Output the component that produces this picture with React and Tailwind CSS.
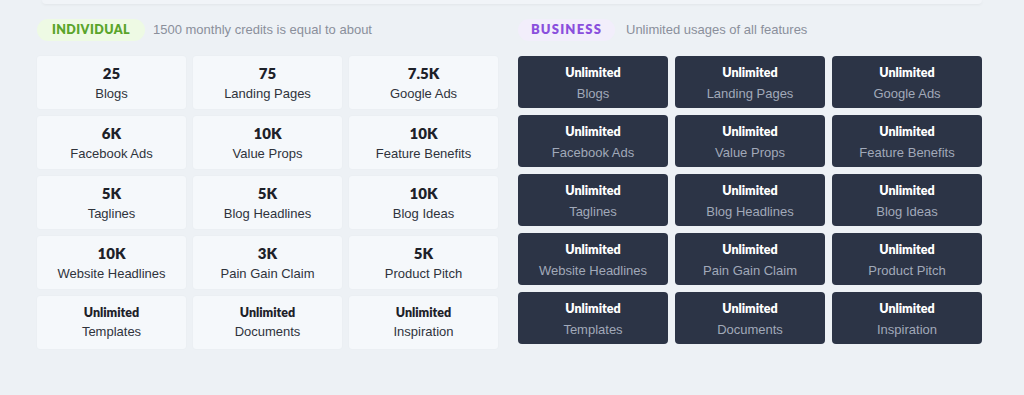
import React from 'react';

const individual = [
  ['25', 'Blogs'],
  ['75', 'Landing Pages'],
  ['7.5K', 'Google Ads'],
  ['6K', 'Facebook Ads'],
  ['10K', 'Value Props'],
  ['10K', 'Feature Benefits'],
  ['5K', 'Taglines'],
  ['5K', 'Blog Headlines'],
  ['10K', 'Blog Ideas'],
  ['10K', 'Website Headlines'],
  ['3K', 'Pain Gain Claim'],
  ['5K', 'Product Pitch'],
  ['Unlimited', 'Templates'],
  ['Unlimited', 'Documents'],
  ['Unlimited', 'Inspiration'],
];

const business = individual.map(([, label]) => label);

const PlanHeader = ({ tag, tagClass, text, textClass }) => (
  <div className="flex h-[22px] items-center">
    <span
      className={`flex h-[22px] items-center justify-center rounded-full font-['Lato'] font-extrabold ${tagClass}`}
    >
      {tag}
    </span>
    <span className={`font-['Liberation_Sans',sans-serif] text-[13px] text-[#8a8f9b] ${textClass}`}>{text}</span>
  </div>
);

export default function App() {
  return (
    <div className="relative h-[395px] w-[1024px] overflow-hidden bg-[#edf1f5]">
      {/* bottom edge of the card above */}
      <div className="mx-[42px] h-[4px] rounded-b-md bg-[#f1f4f8] shadow-[0_1px_3px_rgba(0,0,0,0.05)]" />

      <div className="flex gap-[20px] pl-[37px] pt-[15px]">
        <div>
          <PlanHeader
            tag="INDIVIDUAL"
            tagClass="w-[108px] bg-[#eefae4] text-[12.5px] tracking-[0.035em] text-[#5aa52c]"
            text="1500 monthly credits is equal to about"
            textClass="ml-[8px]"
          />
          <div className="mt-[15px] grid grid-cols-[repeat(3,149px)] gap-x-[7px] gap-y-[7px]">
            {individual.map(([value, label]) => (
              <div
                key={label}
                className="flex h-[53px] flex-col items-center justify-center rounded-[3px] bg-[#f5f8fb] shadow-[0_0_2px_rgba(0,0,0,0.04)]"
              >
                <span
                  className={`font-['Lato'] font-extrabold leading-none text-[#1d2129] ${
                    value === 'Unlimited' ? 'text-[12.5px]' : 'text-[15px]'
                  }`}
                >
                  {value}
                </span>
                <span className="mt-[6px] font-['Liberation_Sans',sans-serif] text-[13px] leading-none text-[#2f333b]">
                  {label}
                </span>
              </div>
            ))}
          </div>
        </div>

        <div>
          <PlanHeader
            tag="BUSINESS"
            tagClass="w-[97px] bg-[#f2eefb] text-[13px] tracking-[0.09em] text-[#8a4fdd]"
            text="Unlimited usages of all features"
            textClass="ml-[11px]"
          />
          <div className="mt-[15px] grid grid-cols-[repeat(3,150px)] gap-x-[7px] gap-y-[7px]">
            {business.map((label) => (
              <div
                key={label}
                className="flex h-[52px] flex-col items-center justify-center rounded-[4px] bg-[#2c3446] pt-[3px]"
              >
                <span className="font-['Lato'] text-[12.5px] font-extrabold leading-none text-white">Unlimited</span>
                <span className="mt-[7px] font-['Liberation_Sans',sans-serif] text-[13px] leading-none text-[#a1a9b9]">
                  {label}
                </span>
              </div>
            ))}
          </div>
        </div>
      </div>
    </div>
  );
}
